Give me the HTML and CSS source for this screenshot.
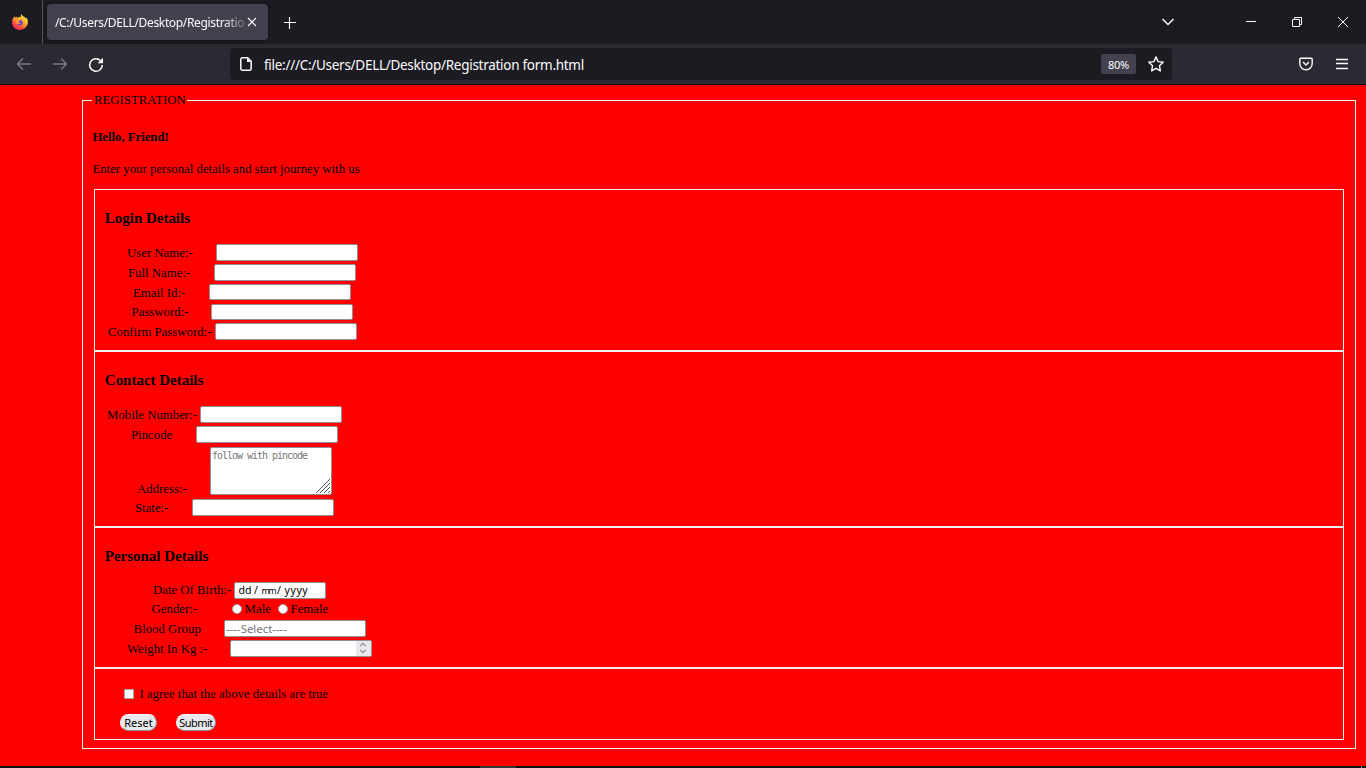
FILE: index.html
```html
<!DOCTYPE html>
<html lang="en">
<head>
<meta charset="utf-8">
<title>Registration form</title>
<link rel="stylesheet" href="styles.css">
</head>
<body>
<header class="tabs">
  <div class="app-icon">
    <svg width="16" height="16" viewBox="0 0 16 16">
      <defs>
        <linearGradient id="fire" x1="0.85" y1="0" x2="0.2" y2="1"><stop offset="0" stop-color="#fff44f"/><stop offset=".4" stop-color="#ffb02b"/><stop offset=".75" stop-color="#ff4a41"/><stop offset="1" stop-color="#e9196e"/></linearGradient>
        <linearGradient id="globe" x1="0" y1="0" x2="1" y2="1"><stop offset="0" stop-color="#9a59ff"/><stop offset="1" stop-color="#5b35bd"/></linearGradient>
      </defs>
      <path fill="url(#fire)" d="M9.500 0c-.9 1-.8 2.100-.4 3L7 2.800 5.400 3.900 4 2.200 3.600 3.700 2.300 2.600C1 4.200.1 6 .1 8.400.1 12.700 3.600 16 8 16s7.900-3.500 7.900-7.900c0-2-.7-3.700-1.900-4.800l.2 1.700C13.200 2.300 10 2.500 9.500 0z"/>
      <circle cx="7.700" cy="8.600" r="2.900" fill="url(#globe)"/>
      <path fill="#ff9c2a" d="M3 5.200c1.200-1 2.700-.9 3.600-.1L8.500 6c-.2.900-1.700.8-2 1.800-.3 1 .9 1.900 2.600 1.300-1 1.500-4 1.500-5-.6-.5-1.200-.5-2.300-1.100-3.300z"/>
    </svg>
  </div>
  <div class="tab"><span class="tab-title">/C:/Users/DELL/Desktop/Registratio</span>
    <svg class="tab-close" width="10" height="10" viewBox="0 0 10 10"><path d="M1 1l8 8M9 1l-8 8"/></svg>
  </div>
  <svg class="plus" width="12" height="12" viewBox="0 0 12 12"><path d="M5.500 0v12M0 5.500h12"/></svg>
  <div class="window-icons">
    <svg class="chevron" width="14" height="10" viewBox="0 0 14 10"><path d="M1.500 2l5.500 5.500L12.500 2"/></svg>
    <svg class="min" width="10" height="10" viewBox="0 0 10 10"><path d="M0 4.500h10"/></svg>
    <svg class="restore" width="10" height="10" viewBox="0 0 10 10"><path d="M.5 2.500h7v7h-7zM2.500 2.500v-2h7v7h-2"/></svg>
    <svg class="close" width="12" height="12" viewBox="0 0 12 12"><path d="M1 1l10 10M11 1L1 11"/></svg>
  </div>
</header>
<nav class="toolbar">
  <svg class="nav-arrow" width="16" height="14" viewBox="0 0 16 14"><path d="M15 7H2M7 1.500L1.500 7 7 12.500"/></svg>
  <svg class="nav-arrow" width="16" height="14" viewBox="0 0 16 14"><path d="M1 7h13M9 1.500L14.500 7 9 12.500"/></svg>
  <svg class="reload" width="16" height="16" viewBox="0 0 16 16"><path d="M14.300 8A6.300 6.300 0 1 1 12.500 3.600"/><path class="solid" d="M15 .8v5.400H9.600z"/></svg>
  <div class="urlbar">
    <svg class="page-icon" width="12" height="14" viewBox="0 0 12 14"><path d="M2.300.8h5.400l3.500 3.500v7.400a1.500 1.500 0 0 1-1.500 1.500H2.300A1.500 1.500 0 0 1 .8 11.700V2.300A1.500 1.500 0 0 1 2.300.8z"/><path class="solid" d="M7 1v4h4.200z"/></svg>
    <span class="url">file:///C:/Users/DELL/Desktop/Registration form.html</span>
    <span class="zoom">80%</span>
    <svg class="star" width="16" height="16" viewBox="0 0 16 16"><path d="M8 .9l2.100 4.700 5.100.6-3.800 3.500 1 5.100L8 12.300l-4.400 2.500 1-5.100L.8 6.200l5.100-.6z"/></svg>
  </div>
  <svg class="pocket" width="14" height="14" viewBox="0 0 14 14"><path d="M2 1.200h10a1.200 1.200 0 0 1 1.200 1.200V6.500a6.200 6.200 0 0 1-12.400 0V2.400A1.200 1.200 0 0 1 2 1.200zM4 5l3 3 3-3"/></svg>
  <svg class="menu" width="12" height="12" viewBox="0 0 12 12"><path d="M0 1.500h12M0 5.500h12M0 10.500h12"/></svg>
</nav>
<main class="page">
  <fieldset class="outer">
    <legend>REGISTRATION</legend>
    <h4 class="hello">Hello, Friend!</h4>
    <p class="intro">Enter your personal details and start journey with us</p>
    <section class="box login">
      <h3>Login Details</h3>
      <div class="row user"><label>User Name:-</label><input class="field"></div>
      <div class="row full"><label>Full Name:-</label><input class="field"></div>
      <div class="row email"><label>Email Id:-</label><input class="field short"></div>
      <div class="row pass"><label>Password:-</label><input class="field short"></div>
      <div class="row confirm"><label>Confirm Password:-</label><input class="field"></div>
    </section>
    <section class="box contact">
      <h3>Contact Details</h3>
      <div class="row mobile"><label>Mobile Number:-</label><input class="field"></div>
      <div class="row pin"><label>Pincode</label><input class="field"></div>
      <div class="row address"><label>Address:-</label><div class="field area"><span>follow with pincode</span>
        <svg class="grip" width="14" height="14" viewBox="0 0 14 14"><path d="M0 14L14 0M4 14L14 4M8 14l6-6M12 14l2-2"/></svg></div></div>
      <div class="row state"><label>State:-</label><input class="field"></div>
    </section>
    <section class="box personal">
      <h3>Personal Details</h3>
      <div class="row dob"><label>Date Of Birth:-</label><div class="field date"><span class="dd">dd</span><span class="slash">/</span><span class="mm">mm</span><span class="slash">/</span><span class="yyyy">yyyy</span></div></div>
      <div class="row gender"><label>Gender:-</label><i class="radio"></i><span class="male">Male</span><i class="radio"></i><span class="female">Female</span></div>
      <div class="row blood"><label>Blood Group</label><input class="field" placeholder="----Select----"></div>
      <div class="row weight"><label>Weight In Kg :-</label><div class="field number"><div class="spin"><svg width="8" height="12" viewBox="0 0 8 12"><path d="M1.200 4L4 1.300 6.800 4M1.200 8L4 10.700 6.800 8"/></svg></div></div></div>
    </section>
    <section class="box final">
      <div class="agree"><i class="check"></i><span>I agree that the above details are true</span></div>
      <div class="buttons"><button class="reset">Reset</button><button class="submit">Submit</button></div>
    </section>
  </fieldset>
</main>
<footer class="taskbar"><i class="task"></i><i class="desktop-edge"></i></footer>
</body>
</html>
```
FILE: styles.css
```css
* { box-sizing: border-box; }
body { margin: 0; width: 1366px; height: 768px; overflow: hidden; display: flex; flex-direction: column; background: #f00; font-family: "Liberation Serif", serif; font-size: 12.8px; color: #000; }
svg { display: block; flex: none; fill: none; stroke: #fbfbfe; }
svg .solid { fill: #fbfbfe; stroke: none; }

.tabs { height: 44px; flex: none; display: flex; align-items: center; background: #1c1b22; }
.app-icon { width: 43px; height: 44px; padding: 14px 0 0 12px; border-right: 1px solid #54535a; }
.app-icon svg { stroke: none; }
.tab { width: 221px; height: 36px; margin-left: 4px; padding: 0 11px 0 8px; display: flex; align-items: center; background: #42414d; border-radius: 4px; box-shadow: 0 0 3px rgba(0,0,0,.5); }
.tab-title { width: 192px; padding-top: 2px; white-space: nowrap; font: 12px/18px "Noto Sans", sans-serif; letter-spacing: -.34px; color: #fbfbfe; -webkit-mask-image: linear-gradient(to right, #000 168px, transparent 196px); mask-image: linear-gradient(to right, #000 168px, transparent 196px); }
.tab-close { stroke-width: 1.1; }
.plus { margin: 2px 0 0 16px; stroke-width: 1.2; }
.window-icons { display: flex; align-items: center; margin-left: auto; padding-right: 17px; }
.chevron { stroke-width: 1.5; margin-right: 71px; }
.min { margin-right: 36px; }
.restore { margin-right: 35px; }
.window-icons .close { stroke-width: 1; }

.toolbar { height: 41px; flex: none; display: flex; align-items: center; padding: 0 18px 1px 16px; background: #2b2a33; border-bottom: 1px solid #0c0c0d; }
.nav-arrow { margin: 1px 20px 0 0; stroke: #7a7980; stroke-width: 1.4; }
.reload { margin-top: 2px; stroke-width: 1.5; }
.urlbar { width: 942px; height: 32px; margin-left: 126px; padding: 0 8px 0 10px; display: flex; align-items: center; background: #1c1b22; border-radius: 4px; }
.page-icon { stroke-width: 1.5; }
.url { margin-left: 12px; padding-top: 2px; font: 13.5px/20px "Noto Sans", sans-serif; letter-spacing: -.28px; color: #fbfbfe; white-space: nowrap; }
.zoom { width: 35px; height: 20px; margin-left: auto; background: #42414d; border-radius: 2px; color: #fbfbfe; font: 11px/22px "Noto Sans", sans-serif; letter-spacing: -.3px; text-align: center; }
.star { margin-left: 12px; stroke-width: 1.4; stroke-linejoin: round; }
.pocket { margin-left: auto; margin-right: 23px; stroke-width: 1.4; }
.menu { stroke-width: 1.4; }

.page { height: 681px; flex: none; padding: 7px 10px 0 82px; }
.outer { height: 657px; min-width: 0; margin: 0; padding: 0 11px 0 9px; border: 1px solid #f4f4f4; }
legend { height: 17px; padding: 0 1px 0 2px; line-height: 16px; width: 95px; white-space: nowrap; }
.hello { margin: 20px 0 0 .4px; font-size: 12.8px; line-height: 16px; letter-spacing: -.03px; }
.intro { margin: 16px 0 0 .4px; line-height: 16px; }
.box { width: 1250px; margin-left: 2px; padding: 0 10px; border: 1px solid #f0f0f0; overflow: hidden; }
.login { height: 162px; margin-top: 12px; }
.contact { height: 176px; }
.personal { height: 141px; }
.final { height: 72px; }
h3 { margin: 19px 0 0 -.2px; font-size: 15px; line-height: 18px; letter-spacing: -.02px; }

.row { display: flex; align-items: flex-start; height: 20px; white-space: nowrap; line-height: 17px; }
h3 + .row { margin-top: 17px; }
.row label { flex: none; padding-top: 1px; }
.field { display: block; flex: none; width: 142px; height: 17px; margin: 0; padding: 0 1px; border: 1px solid #8f8f9d; border-radius: 2px; background: #fff; outline: none; font: 11px/15px "Noto Sans", sans-serif; }
.short { height: 16px; }
.field::placeholder { color: #757575; opacity: 1; }

.user { padding-left: 22px; } .user label { width: 89px; }
.full { padding-left: 23px; } .full label { width: 86px; }
.email { padding-left: 28px; } .email label { width: 76px; }
.pass { height: 19px; padding-left: 26.6px; } .row.pass label { width: 79.4px; padding-top: 0; }
.confirm { padding-left: 3px; } .confirm label { width: 107px; }
.mobile { padding-left: 2px; } .mobile label { width: 93px; }
.pin { height: 21px; padding-left: 26px; } .pin label { width: 65px; }
.address { height: 52px; padding-left: 32px; } .row.address label { width: 73px; padding-top: 34px; }
.state { padding-left: 30px; } .state label { width: 57px; }
.area { width: 122px; height: 48px; display: flex; justify-content: space-between; color: #757575; font: 10px/16px "DejaVu Sans Mono", monospace; }
.area span { width: 104px; letter-spacing: -1.02px; }
.grip { align-self: flex-end; margin: 0 0 1px -14px; stroke: #55555c; stroke-width: 1; }

.dob { height: 19px; padding-left: 48px; } .row.dob label { width: 81px; padding-top: 0; }
.date { display: flex; width: 92px; padding-left: 3.5px; font-size: 10.5px; }
.date span { flex: none; }
.date .dd { width: 15.5px; }
.date .slash { width: 7.5px; }
.date .mm { width: 15.5px; font-size: 9px; letter-spacing: -1.7px; }
.date .yyyy { letter-spacing: .6px; }
.gender { height: 19px; padding-left: 46.6px; } .row.gender label { width: 80.4px; padding-top: 0; }
.radio { flex: none; width: 10px; height: 10px; margin-top: 3px; border: 1px solid #aaaab4; border-radius: 50%; background: #fff; }
.male { width: 33.4px; margin-left: 2.6px; }
.female { margin-left: 2.6px; }
.blood { padding-left: 28.6px; } .blood label { width: 90.4px; }
.blood .field { padding-bottom: 1px; font-size: 11.4px; }
.weight { padding-left: 22px; } .weight label { width: 103px; }
.number { display: flex; justify-content: flex-end; padding: 0; }
.spin { width: 15px; height: 15px; padding: 1px 0 0 3px; background: #e9e9ed; }
.spin svg { stroke: #8f8f9d; stroke-width: 1.3; }

.agree { display: flex; height: 17px; margin: 17px 0 0 19px; line-height: 17px; }
.check { width: 10px; height: 10px; margin: 3px 5.5px 0 0; border: 1px solid #a9a9b3; border-radius: 1px; background: #fff; }
.buttons { display: flex; gap: 19px; margin: 11px 0 0 15px; }
button { height: 17px; padding: 0; border: 1px solid; border-color: #f4f4f7 #8f8f9d #8f8f9d #f4f4f7; border-radius: 9px; background: #e9e9ed; color: #000; font: 11px/15px "Noto Sans", sans-serif; }
.reset { width: 37px; letter-spacing: 0; }
.submit { width: 40px; letter-spacing: -.5px; }

.taskbar { height: 2px; flex: none; display: flex; background: #101010; }
.task { width: 36px; margin-left: 480px; background: #343434; }
.desktop-edge { width: 1px; margin-left: auto; margin-right: 4px; background: #777; }
```
